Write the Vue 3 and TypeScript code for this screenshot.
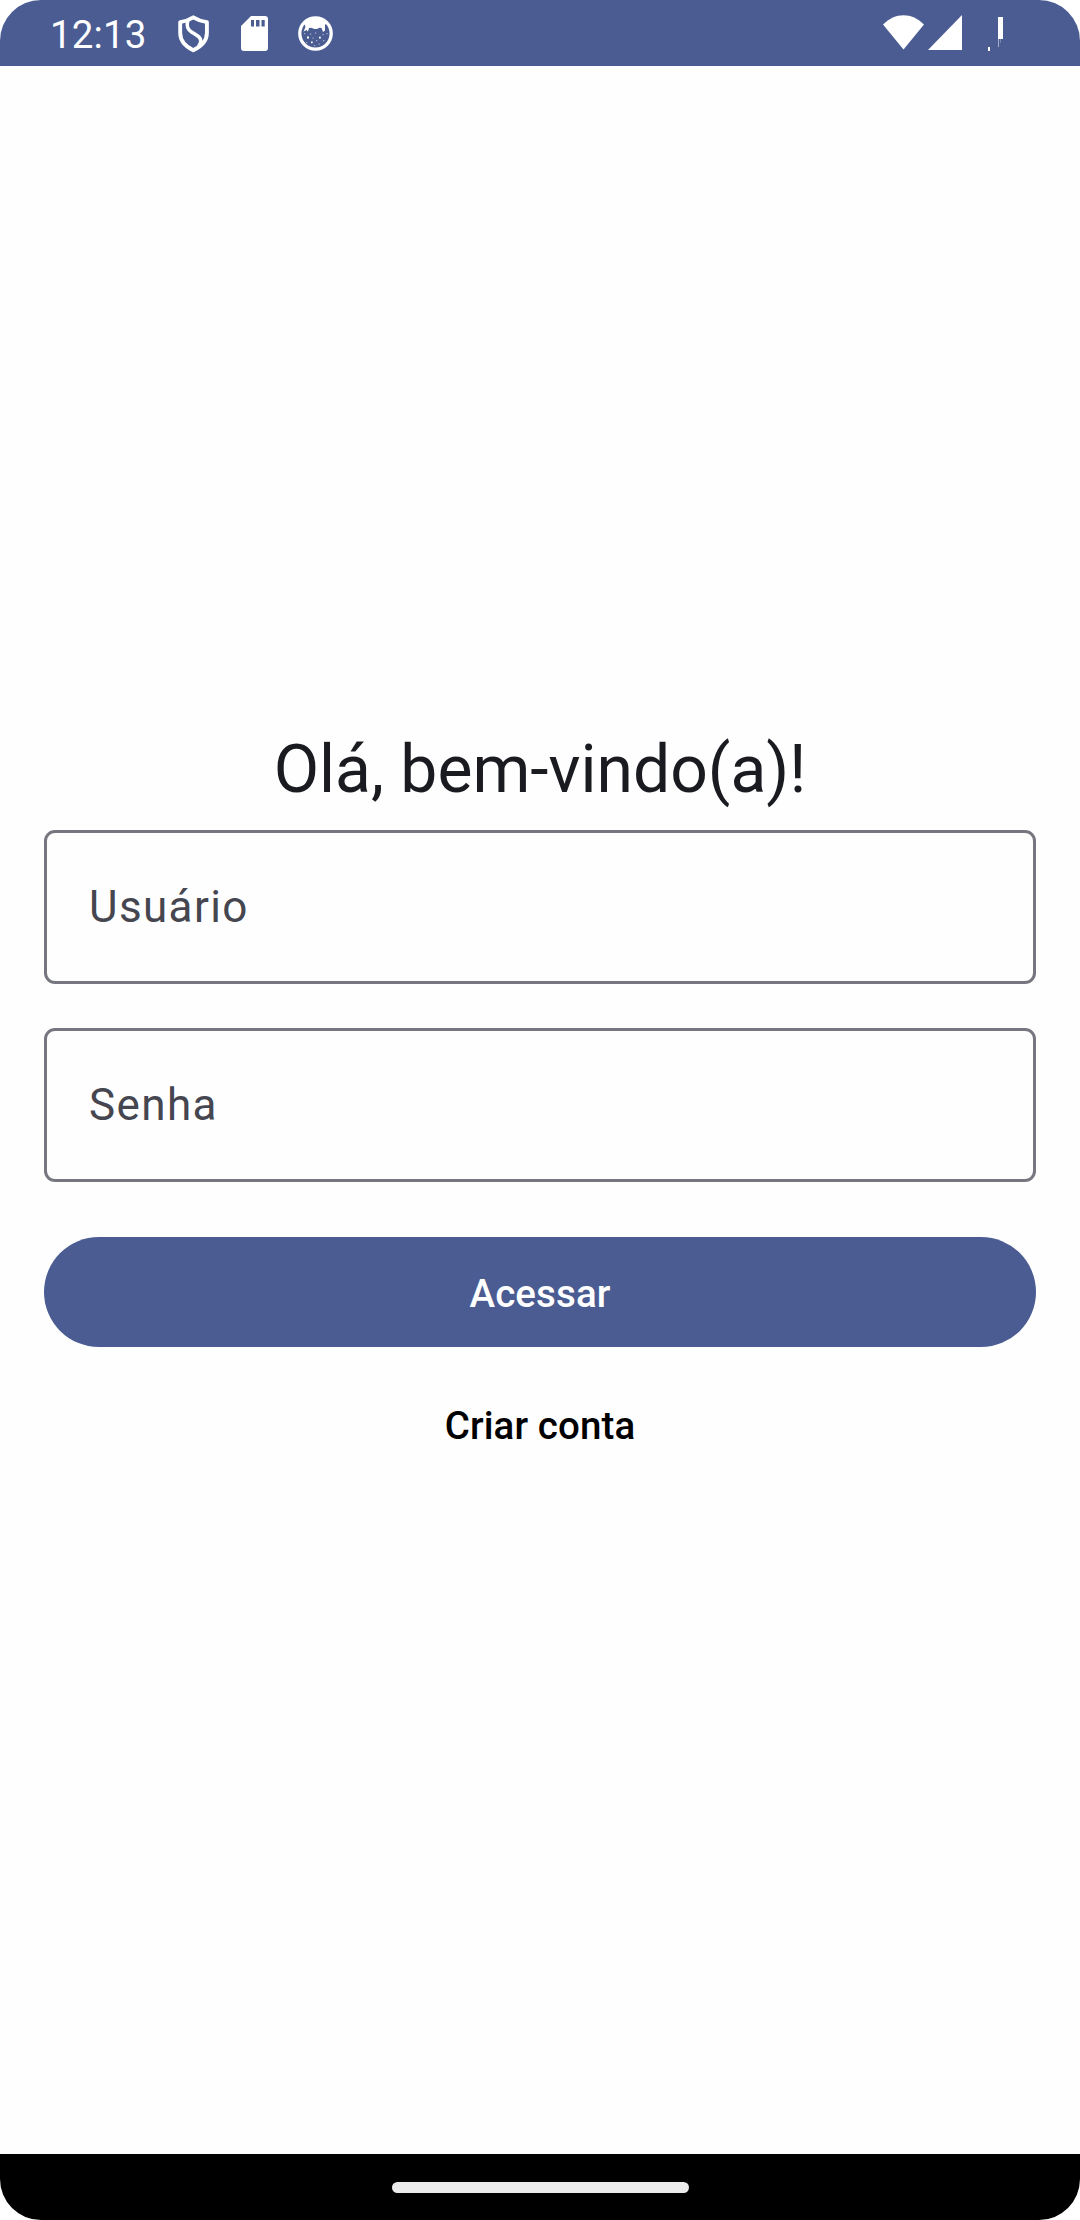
<script setup lang="ts">
import { ref } from 'vue'

interface Field {
  id: string
  label: string
  type: string
}

const time = '12:13'
const fields: Field[] = [
  { id: 'user', label: 'Usuário', type: 'text' },
  { id: 'password', label: 'Senha', type: 'password' },
]
const values = ref<Record<string, string>>({ user: '', password: '' })
</script>

<template>
  <div class="screen">
    <header class="status">
      <span class="clock">{{ time }}</span>
      <svg class="shield" width="33" height="38" viewBox="0 0 33 38">
        <path
          d="M16.300 2.300 C12.500 4.700 8 6.300 3.200 7.200 V18 C3.200 26 8.500 31.500 16.300 35.300 C24.100 31.500 29.900 26 29.900 18 V7.200 C24.800 6.300 20.200 4.700 16.300 2.300Z"
          fill="none" stroke="#fff" stroke-width="3.900" stroke-linejoin="round"
        />
        <path d="M11 4.500 C9.300 10.500 10 14 14.500 17 C19.500 20.300 24 22 23.800 26 Q23.700 28.500 21.500 31.500" fill="none" stroke="#fff" stroke-width="3.600" />
      </svg>
      <svg class="card" width="27" height="35" viewBox="0 0 27 35">
        <path
          fill="#fff" fill-rule="evenodd"
          d="M10 0H24Q27 0 27 3V32Q27 35 24 35H3Q0 35 0 32V10ZM10 4V10.500H13V4ZM15 4V10.500H18.500V4ZM20.500 4V10.500H23.700V4Z"
        />
      </svg>
      <svg class="cat" width="35" height="35" viewBox="0 0 35 35">
        <circle cx="17.500" cy="17.500" r="15.700" fill="none" stroke="#fff" stroke-width="3.300" />
        <path
          fill="#fff"
          d="M6 6.500 Q17.500 -2.500 29 6.500 L27 9 V14.500 L25 16 L23.500 12 Q21 11.500 20 12.500 Q17.500 13.500 15 12.500 Q14 11.500 11 12 L10 15.500 L8.500 14 L5.500 15.500 L7.500 11Z"
        />
        <g fill="#fff">
          <rect x="9" y="20.500" width="2" height="2" />
          <rect x="21" y="20.700" width="1.800" height="1.800" />
          <rect x="13" y="25.500" width="1.700" height="1.700" />
          <g opacity=".55">
            <rect x="6" y="17" width="1.200" height="1.200" />
            <rect x="12" y="17.500" width="1.200" height="1.200" />
            <rect x="17" y="16.500" width="1.200" height="1.200" />
            <rect x="24.500" y="18" width="1.200" height="1.200" />
            <rect x="28.500" y="17" width="1.200" height="1.200" />
            <rect x="14.500" y="21.500" width="1.200" height="1.200" />
            <rect x="18" y="24" width="1.200" height="1.200" />
            <rect x="25" y="24" width="1.300" height="1.300" />
            <rect x="8" y="26" width="1.200" height="1.200" />
            <rect x="20.500" y="27.500" width="1.200" height="1.200" />
            <rect x="16" y="29" width="1.200" height="1.200" />
          </g>
        </g>
      </svg>
      <svg class="wifi" width="41" height="35" viewBox="0 0 41 35">
        <path fill="#fff" d="M0 9.500 C12 -3 29 -3 41 9.500 L20.500 34.500Z" />
      </svg>
      <svg class="signal" width="34" height="35" viewBox="0 0 34 35">
        <path fill="#fff" d="M34 0V35H0Z" />
      </svg>
      <svg class="battery" width="15" height="34" viewBox="0 0 15 34">
        <path fill="#fff" d="M10 0H15V22H10ZM0 30H2V34H0Z" />
        <path fill="#fff" opacity=".5" d="M10 22H11V30H10Z" />
        <path fill="#fff" opacity=".25" d="M12 22H13V26H12Z" />
      </svg>
    </header>

    <main class="content">
      <h1>Olá, bem-vindo(a)!</h1>
      <input
        v-for="field in fields"
        :key="field.id"
        v-model="values[field.id]"
        class="field"
        :type="field.type"
        :placeholder="field.label"
        :aria-label="field.label"
      />
      <button class="primary" type="button">Acessar</button>
      <button class="link" type="button">Criar conta</button>
    </main>

    <footer class="nav"><span class="handle"></span></footer>
  </div>
</template>

<style>
body {
  margin: 0;
  background: #fff;
}
</style>

<style scoped>
.screen {
  width: 1080px;
  height: 2220px;
  display: flex;
  flex-direction: column;
  overflow: hidden;
  border-radius: 41px;
  background: #fefefe;
  font-family: Roboto, "Liberation Sans", sans-serif;
}

.status {
  box-sizing: border-box;
  height: 66px;
  flex: none;
  display: flex;
  align-items: flex-start;
  padding: 0 77px 0 50px;
  background: #4a5c92;
  color: #fff;
}

.status svg {
  flex: none;
  display: block;
}

.clock {
  width: 127px;
  margin-top: 12px;
  font-size: 38.5px;
  line-height: 45px;
  letter-spacing: 0.1px;
}

.shield {
  margin-top: 14.5px;
}

.card {
  margin: 16px 0 0 31px;
}

.cat {
  margin: 16px 0 0 30px;
}

.wifi {
  margin: 15px 4px 0 auto;
}

.signal {
  margin: 15px 26px 0 0;
}

.battery {
  margin-top: 17px;
}

.content {
  flex: 1;
  display: flex;
  flex-direction: column;
  padding: 660px 44px 0;
}

h1 {
  margin: 0 0 16px;
  color: #1a1b21;
  font-size: 66px;
  font-weight: 400;
  line-height: 88px;
  text-align: center;
}

.field {
  box-sizing: border-box;
  width: 100%;
  height: 154px;
  margin: 0 0 44px;
  padding: 0 41px 0 42px;
  border: 3px solid #757680;
  border-radius: 11px;
  outline: none;
  background: transparent;
  color: #1a1b21;
  font-family: inherit;
  font-size: 44px;
  letter-spacing: 1.375px;
}

.field::placeholder {
  color: #45464f;
  opacity: 1;
}

button {
  height: 110px;
  padding: 2px 0 0;
  border: 0;
  border-radius: 55px;
  font-family: inherit;
  font-size: 38.5px;
  font-weight: 500;
  letter-spacing: 0.1px;
}

.primary {
  margin-top: 11px;
  background: #4a5c92;
  color: #fff;
}

.link {
  margin-top: 22px;
  background: transparent;
  color: #000;
}

.nav {
  height: 66px;
  flex: none;
  display: flex;
  align-items: center;
  justify-content: center;
  background: #000;
}

.handle {
  width: 297px;
  height: 11px;
  border-radius: 6px;
  background: #ebebeb;
}
</style>
